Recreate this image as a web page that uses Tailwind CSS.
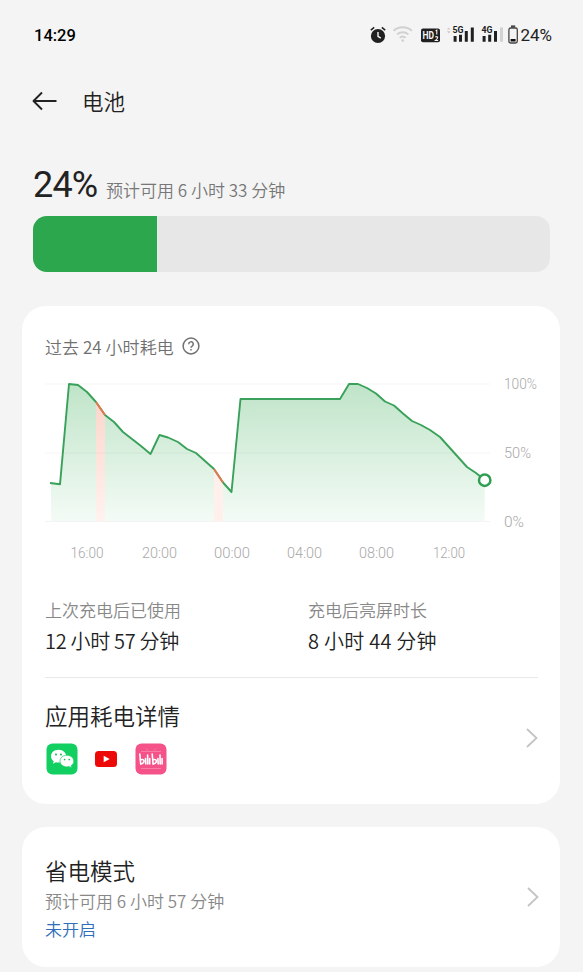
<!DOCTYPE html>
<html lang="zh-CN">
<head>
<meta charset="utf-8">
<title>电池</title>
<script src="https://cdn.jsdelivr.net/npm/@tailwindcss/browser@4"></script>
</head>
<body class="bg-[#f4f4f4] w-[583px] h-[972px] overflow-hidden font-['Noto_Sans_CJK_SC',sans-serif] font-[350] text-[#222]">
<header class="flex h-[70px] items-center justify-between pl-[34px] pr-[31px] font-['Roboto',sans-serif]">
  <span class="pt-[2px] text-[16.5px] font-medium leading-none text-black">14:29</span>
  <div class="flex items-center">
    <svg width="150" height="24" viewBox="369 23 150 24" fill="none">
      <circle cx="378" cy="36" r="7.1" fill="#202020"/>
      <path d="M370.8 30.2l3.4-2.8M385.2 30.2l-3.4-2.8" stroke="#202020" stroke-width="1.5"/>
      <path d="M378 32v4.3l2.8 1.8" stroke="#f4f4f4" stroke-width="1.4"/>
      <g stroke="#d0d0d0" stroke-width="1.9"><path d="M393.6 30.8a13.6 13.6 0 0 1 18.2 0"/><path d="M397 34.4a8.6 8.6 0 0 1 11.4 0"/><path d="M399.8 37.8a4.4 4.4 0 0 1 5.8 0"/></g>
      <circle cx="402.7" cy="40.6" r="1.3" fill="#d0d0d0"/>
      <rect x="421" y="28.6" width="19" height="13.6" rx="2" fill="#202020"/>
      <text x="422.6" y="39.2" font-size="10" font-weight="700" fill="#f4f4f4" textLength="11.5" lengthAdjust="spacingAndGlyphs">HD</text>
      <path d="M435.6 30.8l1.2-.6v4.2M435.3 37.2q1.3-1.2 2.4 0c.4.9-.8 1.8-2.3 3.3h2.8" stroke="#f4f4f4" stroke-width="1.1"/>
      <path d="M446.8 29.6l1.9-2.2 1.9 2.2zM446.8 31.2l1.9 2.2 1.9-2.2z" fill="#ccc"/>
      <text x="452.5" y="33.4" font-size="9.5" font-weight="700" fill="#202020" textLength="11" lengthAdjust="spacingAndGlyphs">5G</text>
      <path d="M453.6 36h3v5.8h-3zM459 34.8h3v7h-3zM464.8 31h3v10.8h-3zM470.8 27.4h3v14.4h-3z" fill="#202020"/>
      <text x="481.5" y="33.4" font-size="9.5" font-weight="700" fill="#202020" textLength="11" lengthAdjust="spacingAndGlyphs">4G</text>
      <path d="M482.6 36h3v5.8h-3zM488.2 34.8h3v7h-3zM494 31h3v10.8h-3z" fill="#202020"/>
      <path d="M500 27.4h3v14.4h-3z" fill="#d2d2d2"/>
      <rect x="508.9" y="28" width="8.4" height="15" rx="1.8" stroke="#444" stroke-width="1.3"/>
      <path d="M511 25.4h4.2v2.2H511z" fill="#444"/><path d="M510.6 39h5v2.6h-5z" fill="#111"/>
    </svg>
    <span class="ml-[1px] text-[17px] font-normal leading-none">24%</span>
  </div>
</header>

<nav class="flex h-[62px] items-center pl-[32px]">
  <svg width="26" height="20" viewBox="0 0 26 20" fill="none" stroke="#222" stroke-width="1.9"><path d="M24.5 10H2M10 1.5L1.5 10l8.5 8.5" stroke-linejoin="round"/></svg>
  <h1 class="-mt-px ml-[24px] text-[21.5px] leading-[30px]">电池</h1>
</nav>

<section class="px-[33px] pt-[30px]">
  <div class="flex h-[54px] items-baseline">
    <span class="w-[73px] font-['Roboto',sans-serif] text-[36px] font-normal leading-[47px] tracking-[-0.8px]">24%</span>
    <span class="whitespace-nowrap text-[17px] leading-[24px] text-[#777]">预计可用 6 小时 33 分钟</span>
  </div>
  <div class="h-[56px] overflow-hidden rounded-[14px] bg-[#e7e7e7]"><div class="h-full w-[124px] bg-[#2ca74d]"></div></div>
</section>

<main class="px-[22px] pt-[34px]">
  <section class="h-[498px] w-[538px] rounded-[24px] bg-white px-[23px] pt-[27px]">
    <div class="flex h-[27px] items-center text-[17px] text-[#707070]">
      <span class="whitespace-nowrap tracking-[0.05px]">过去 24 小时耗电</span>
      <svg class="-mt-[2px] ml-[8px]" width="18" height="18" viewBox="0 0 18 18" fill="none" stroke="#707070" stroke-width="1.5"><circle cx="9" cy="9" r="7.9"/><path d="M6.7 7.2a2.3 2.3 0 1 1 3.5 1.9c-.8.5-1.2.8-1.2 1.7M9 12v1.6"/></svg>
    </div>
    <svg class="mt-[10px] block" width="500" height="200" viewBox="45 370 500 200" fill="none">
      <defs>
        <linearGradient id="g" x1="0" y1="384" x2="0" y2="521" gradientUnits="userSpaceOnUse"><stop stop-color="#bfe4c8"/><stop offset="1" stop-color="#f4fbf6"/></linearGradient>
        <linearGradient id="r" x1="0" y1="400" x2="0" y2="521" gradientUnits="userSpaceOnUse"><stop stop-color="#fbd6cb"/><stop offset="1" stop-color="#fff2ef"/></linearGradient>
      </defs>
      <path d="M51 521V483L60 484.3 69 384 78 385 87 392 96 402 105 415 114 422 123 432 132 439 141 446 150.5 454 159.5 435 168 437.5 178 442 187 449 196 453 205 461 214 469 223 482.5 231.5 492 240.5 399H340L349 384H358L367 388 376 393.5 385 401.5 394 405.5 403 413.5 412 421 421 425 430 430 440 437 449 447 458 457 467 467 476 473 484.7 480V521z" fill="url(#g)"/>
      <path d="M96 402L105 415V521H96z" fill="url(#r)"/>
      <path d="M214 469L223 482.5V521H214z" fill="#fff0ec"/>
      <path d="M45 384H490M45 453H490M45 521.5H490" stroke="#000" stroke-opacity=".045"/>
      <path d="M50 483L60 484.3 69 384 78 385 87 392 96 402 105 415 114 422 123 432 132 439 141 446 150.5 454 159.5 435 168 437.5 178 442 187 449 196 453 205 461 214 469 223 482.5 231.5 492 240.5 399H340L349 384H358L367 388 376 393.5 385 401.5 394 405.5 403 413.5 412 421 421 425 430 430 440 437 449 447 458 457 467 467 476 473 484.7 480" stroke="#39a159" stroke-width="1.9" stroke-linejoin="round"/>
      <path d="M96 402L105 415M214 469L223 482.5" stroke="#e5784e" stroke-width="1.9"/>
      <circle cx="484.7" cy="480.2" r="5.7" fill="#fff" stroke="#2f9e50" stroke-width="2.5"/>
      <g class="font-['Roboto',sans-serif]" font-size="14" font-weight="300" fill="#a8a8a8">
        <text x="504" y="389" textLength="33" lengthAdjust="spacingAndGlyphs">100%</text>
        <text x="504" y="458" textLength="27" lengthAdjust="spacingAndGlyphs">50%</text>
        <text x="504" y="527" textLength="20" lengthAdjust="spacingAndGlyphs">0%</text>
        <text x="70.5" y="557.5" textLength="33" lengthAdjust="spacingAndGlyphs">16:00</text>
        <text x="142" y="557.5" textLength="35" lengthAdjust="spacingAndGlyphs">20:00</text>
        <text x="214" y="557.5" textLength="36" lengthAdjust="spacingAndGlyphs">00:00</text>
        <text x="287" y="557.5" textLength="35" lengthAdjust="spacingAndGlyphs">04:00</text>
        <text x="359" y="557.5" textLength="35" lengthAdjust="spacingAndGlyphs">08:00</text>
        <text x="433" y="557.5" textLength="32" lengthAdjust="spacingAndGlyphs">12:00</text>
      </g>
    </svg>
    <div class="flex h-[108px] w-[493px] border-b border-[#e8e8e8] pt-[27px]">
      <div class="w-[263px]"><p class="text-[17px] leading-[26px] text-[#888]">上次充电后已使用</p><p class="mt-[3px] text-[20px] leading-[30px] tracking-[-0.3px]">12 小时 57 分钟</p></div>
      <div><p class="text-[17px] leading-[26px] text-[#888]">充电后亮屏时长</p><p class="mt-[3px] text-[20px] leading-[30px] tracking-[0.25px]">8 小时 44 分钟</p></div>
    </div>
    <div class="flex w-[493px] items-center justify-between pt-[20px]">
      <div>
        <h2 class="text-[22.5px] leading-[34px]">应用耗电详情</h2>
        <div class="mt-[11px] flex items-center pl-[1.4px]">
          <svg width="32" height="32" viewBox="0 0 32 32"><rect x=".5" y=".5" width="31" height="31" rx="6" fill="#12cf62"/><path d="M12.5 6.8c-4.3 0-7.5 2.8-7.5 6.4 0 2 1 3.8 2.7 5l-.8 2.5 3-1.5c.8.2 1.7.3 2.6.3 4.3 0 7.7-2.8 7.7-6.3s-3.4-6.4-7.7-6.4z" fill="#fff"/><path d="M20.9 12.3c-3.7 0-6.9 2.5-6.9 5.8s3.2 5.8 6.9 5.8c.7 0 1.4-.1 2-.3l2.7 1.4-.6-2.2c1.7-1 2.8-2.7 2.8-4.7 0-3.3-3.2-5.8-6.9-5.8z" fill="#fff" stroke="#12cf62" stroke-width=".7"/><g fill="#12b958"><circle cx="10" cy="11.5" r="1"/><circle cx="15" cy="11.5" r="1"/><circle cx="18.6" cy="16.5" r=".85"/><circle cx="23.2" cy="16.5" r=".85"/></g></svg>
          <svg class="ml-[17px]" width="22" height="16" viewBox="0 0 22 16"><rect width="22" height="16" rx="3.5" fill="#ee0909"/><path d="M8.7 4.7v6.6l6-3.3z" fill="#fff"/></svg>
          <svg class="ml-[18px]" width="32" height="32" viewBox="0 0 32 32"><rect x=".5" y=".5" width="31" height="31" rx="6" fill="#f45288"/><path d="M6 8.5h20M11 5.5l2 2M21 5.5l-2 2M6 25.5h20" stroke="#f67ba5" fill="none"/><g fill="none" stroke="#fff" stroke-width="1.6" stroke-linecap="round"><path d="M4.8 11l.9 10M10.5 15.5l.3 5.5M12.6 12l.2 9M14.7 15.5v5.5"/><path d="M5.6 16.8c3-.8 3.9.6 3.2 2.3-.4 1.2-1.3 1.9-3.1 1.9"/><path d="M17.2 11l.9 10M22.9 15.5l.3 5.5M25 12l.2 9M27.1 15.5v5.5"/><path d="M18 16.8c3-.8 3.9.6 3.2 2.3-.4 1.2-1.3 1.9-3.1 1.9"/></g></svg>
        </div>
      </div>
      <svg class="mt-[2px]" width="13" height="20" viewBox="0 0 13 20" fill="none" stroke="#c4c4c4" stroke-width="1.8"><path d="M2 1l9.5 9-9.5 9"/></svg>
    </div>
  </section>

  <section class="mt-[23px] flex h-[140px] w-[538px] items-center justify-between rounded-[24px] bg-white pl-[23px] pr-[21px]">
    <div class="pt-px">
      <h2 class="text-[22.5px] leading-[34px]">省电模式</h2>
      <p class="whitespace-nowrap text-[17px] leading-[28px] text-[#888]">预计可用 6 小时 57 分钟</p>
      <p class="text-[17px] leading-[27px] text-[#2f6fb9]">未开启</p>
    </div>
    <svg width="13" height="20" viewBox="0 0 13 20" fill="none" stroke="#c4c4c4" stroke-width="1.8"><path d="M2 1l9.5 9-9.5 9"/></svg>
  </section>
</main>
</body>
</html>
